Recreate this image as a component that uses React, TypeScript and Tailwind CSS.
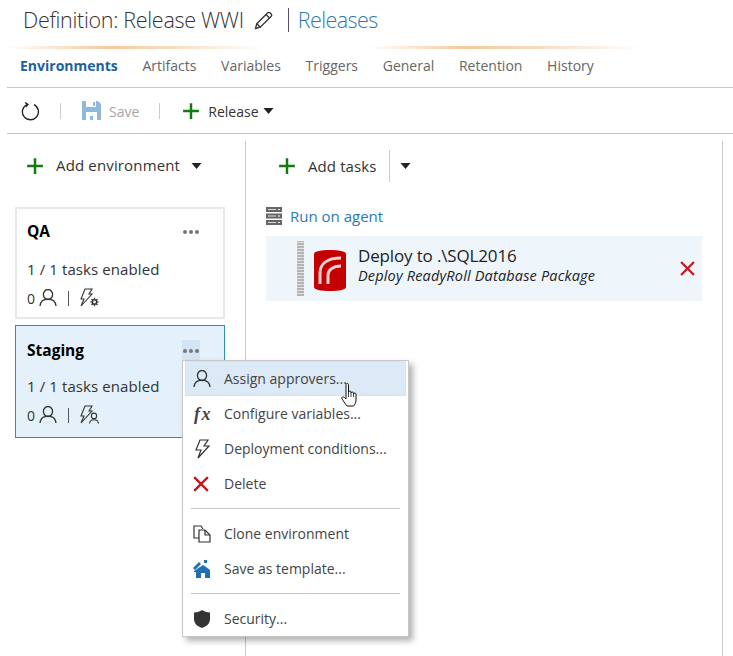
import React from "react";

const Plus = ({ size = 18 }: { size?: number }) => (
  <svg width={size} height={size} viewBox="0 0 16 16" className="shrink-0">
    <path d="M8 1v14M1 8h14" stroke="#107c10" strokeWidth="2.2" fill="none" />
  </svg>
);

const Caret = ({ w = 11 }: { w?: number }) => (
  <svg width={w} height={6} viewBox="0 0 10 6" className="shrink-0">
    <path d="M0 0h10L5 6z" fill="#222" />
  </svg>
);

const Person = ({ size = 18 }: { size?: number }) => (
  <svg width={size} height={size} viewBox="0 0 18 18" fill="none" stroke="#333" strokeWidth="1.3" className="shrink-0">
    <ellipse cx="9" cy="5.500" rx="4.600" ry="5" />
    <path d="M1 17c.5-4.400 3.800-6.800 8-6.800s7.500 2.400 8 6.800" />
  </svg>
);

const Bolt = ({ size = 20 }: { size?: number }) => (
  <svg width={size} height={size} viewBox="0 0 20 20" fill="none" stroke="#333" strokeWidth="1.2" className="shrink-0">
    <path d="M7 1h8l-4 6h5L5 19l3-8H3z" strokeLinejoin="miter" />
  </svg>
);

const BoltGear = () => (
  <svg width={20} height={20} viewBox="0 0 20 20" fill="none" stroke="#333" strokeWidth="1.1" className="shrink-0">
    <path d="M5 1h7L9 6h3L1 18l3-7H1z" />
    <circle cx="14.5" cy="14" r="2.2" strokeWidth="1.6" />
    <path d="M14.5 9.800v1.600M14.5 16.600v1.600M10.300 14h1.600M17.100 14h1.600M11.500 11l1.100 1.100M16.400 15.900l1.100 1.100M11.500 17l1.100-1.100M16.400 12.100l1.100-1.100" strokeWidth="1.2" />
  </svg>
);

const BoltPerson = () => (
  <svg width={20} height={20} viewBox="0 0 20 20" fill="none" stroke="#333" strokeWidth="1.1" className="shrink-0">
    <path d="M5 1h7L9 6h3L1 18l3-7H1z" />
    <ellipse cx="14" cy="11" rx="2.600" ry="2.900" />
    <path d="M9.500 18.500c.3-2.600 2-3.800 4.500-3.800s4.200 1.200 4.500 3.800" />
  </svg>
);

const RedX = ({ size = 14 }: { size?: number }) => (
  <svg width={size} height={size} viewBox="0 0 14 14" className="shrink-0">
    <path d="M1 1l12 12M13 1L1 13" stroke="#c8161d" strokeWidth="2.100" fill="none" />
  </svg>
);

const Refresh = () => (
  <svg width={19} height={20} viewBox="0 0 19 20" fill="none" stroke="#222" strokeWidth="1.300">
    <path d="M6.500 3.300A8 8 0 1 0 13 3.600" />
    <path d="M4 1.500l3 2-2.300 2.600" />
  </svg>
);

const Floppy = () => (
  <svg width={19} height={19} viewBox="0 0 19 19">
    <path d="M0 0h16l3 3v16H0z" fill="#8fb8de" />
    <path d="M4 0h10v6H4z" fill="#fff" />
    <path d="M11 1h2v4h-2z" fill="#8fb8de" />
    <path d="M4 11h11v8H4z" fill="#fff" />
    <path d="M8 15h3v4H8z" fill="#8fb8de" />
  </svg>
);

const Pencil = () => (
  <svg width={19} height={19} viewBox="0 0 19 19" fill="none" stroke="#333" strokeWidth="1.300">
    <path d="M1.500 17.500l1.300-4.800L13.500 2c.8-.8 2-.8 2.800 0l.7.7c.8.8.8 2 0 2.800L6.300 16.200z" />
    <path d="M12 3.500l3.500 3.500M2.800 12.700l3.500 3.500" />
  </svg>
);

const Server = () => (
  <svg width={16} height={18} viewBox="0 0 16 18">
    <path d="M0 0h16v5H0zM0 6.500h16v5H0zM0 13h16v5H0z" fill="#666" />
    <path d="M2 2h8v1H2zM2 8.500h8v1H2zM2 15h8v1H2z" fill="#ddd" />
    <path d="M12 2h2v1h-2zM12 8.500h2v1h-2zM12 15h2v1h-2z" fill="#fff" />
  </svg>
);

const ReadyRoll = () => (
  <svg width={32} height={41} viewBox="0 0 32 41" className="shrink-0">
    <path d="M0 4C0 1 8 0 16 0s16 1 16 4v33c0 3-8 4-16 4S0 40 0 37z" fill="#c40000" />
    <path d="M6 34V23C6 14 13 8 27 8" stroke="#f4d4d4" strokeWidth="3" fill="none" />
    <path d="M14 34v-9c0-5 5-9 13-9" stroke="#f4d4d4" strokeWidth="3" fill="none" />
  </svg>
);

const Fx = () => (
  <span className="ml-[1px] font-['Liberation_Serif',serif] text-[18px] font-bold italic leading-none tracking-[1.500px] text-[#444]">fx</span>
);

const Clone = () => (
  <svg width={18} height={18} viewBox="0 0 18 18" fill="none" stroke="#333" strokeWidth="1.200">
    <path d="M6 13H1V1h7l2 3" />
    <path d="M6 5h6l5 5v7H6z" fill="#fff" />
    <path d="M12 5v5h5" />
  </svg>
);

const Template = () => (
  <svg width={18} height={18} viewBox="0 0 18 18">
    <path d="M1 11l9-6 3 2 4 3v8h-5v-5H8v5H3v-6H1z" fill="#1e6fb4" />
    <path d="M0 8l6-6 2 2-6 6zM11 0h3v3h-3z" fill="#1e6fb4" />
    <path d="M8 13h4v5H8z" fill="#fff" />
  </svg>
);

const Shield = () => (
  <svg width={18} height={18} viewBox="0 0 18 18">
    <path d="M9 0c2 1.500 5 2.300 8 2.500V9c0 4.500-3.500 7.500-8 9-4.500-1.500-8-4.500-8-9V2.500C4 2.300 7 1.500 9 0z" fill="#333" />
  </svg>
);

const Hand = () => (
  <svg width={18} height={24} viewBox="0 0 18 24" className="absolute left-[155px] top-[21px]">
    <path
      d="M5 1.500c0-1.300 2.500-1.300 2.500 0V9c0-1.200 2.500-1.200 2.500 0v1c0-1.200 2.500-1.200 2.500 0v1c0-1.200 2.500-1.200 2.500 0v6c0 3-1.500 5-2.500 6H6c-1.500-1.500-3-4.500-5-7-1-1.500 1-3 2.500-1.500L5 16z"
      fill="#fff"
      stroke="#111"
      strokeWidth="1"
      strokeLinejoin="round"
    />
    <path d="M7.500 9v5M10 10v4M12.500 11v3" stroke="#111" strokeWidth="0.800" />
  </svg>
);

const Dots = () => (
  <div className="flex gap-[2px]">
    <span className="h-[4px] w-[4px] rounded-full bg-[#777]" />
    <span className="h-[4px] w-[4px] rounded-full bg-[#777]" />
    <span className="h-[4px] w-[4px] rounded-full bg-[#777]" />
  </div>
);

function EnvCard({ name, selected, icon }: { name: string; selected?: boolean; icon: React.ReactNode }) {
  return (
    <div
      className={
        selected
          ? "h-[113px] w-[210px] border border-[#2f8fb5] bg-[#e4f1fa] pl-[11px] pr-[24px] text-[#222]"
          : "h-[112px] w-[210px] border-2 border-[#e8e8e8] bg-white pl-[10px] pr-[23px] text-[#222]"
      }
    >
      <div className={selected ? "flex h-[49px] items-center justify-between" : "flex h-[45px] items-center justify-between"}>
        <span className="text-[15.5px] font-bold text-black">{name}</span>
        <div className={selected ? "flex h-[22px] w-[18px] items-center justify-center bg-[#d3e5f4]" : "flex h-[22px] w-[18px] items-center justify-center"}>
          <Dots />
        </div>
      </div>
      <div className={selected ? "text-[15px] leading-[22px] tracking-[0.1px] text-[#333]" : "mt-[4px] text-[15px] leading-[22px] tracking-[0.1px] text-[#333]"}>1 / 1 tasks enabled</div>
      <div className="mt-[6px] flex h-[24px] items-center text-[14px] text-[#333]">
        <span className="w-[12px]">0</span>
        <Person />
        <span className="ml-[11px] mr-[11px] h-[15px] w-[1px] bg-[#555]" />
        {icon}
      </div>
    </div>
  );
}

function MenuItem({ icon, label, active }: { icon: React.ReactNode; label: string; active?: boolean }) {
  return (
    <div
      className={
        active
          ? "relative mx-[2px] flex h-[35px] items-center border border-[#d3e3f3] bg-[#dce9f6] pl-[7px]"
          : "mx-[2px] flex h-[35px] items-center border border-transparent pl-[7px]"
      }
    >
      <span className="flex w-[31px] items-center">{icon}</span>
      <span className="text-[14px] text-[#444]">{label}</span>
      {active && <Hand />}
    </div>
  );
}

export default function App() {
  const tabs = ["Artifacts", "Variables", "Triggers", "General", "Retention", "History"];
  return (
    <div className="relative h-[656px] w-[733px] overflow-hidden bg-white font-['Open_Sans','Noto_Sans',sans-serif] text-[#222]">
      <div className="flex h-[46px] items-center pb-[6px] pl-[23px]">
        <span className="text-[21.5px] font-light tracking-[-0.3px] text-[#333]">Definition: Release WWI</span>
        <span className="ml-[10px]"><Pencil /></span>
        <span className="ml-[15px] h-[24px] w-[1px] bg-[#5c4a72]" />
        <span className="ml-[9px] text-[21.5px] font-light tracking-[-0.6px] text-[#2a7ab8]">Releases</span>
      </div>

      <div className="flex h-[3px] pl-[7px]">
        <div className="h-full w-[257px] bg-[linear-gradient(90deg,#fff,#f7c89c_40%,#fbe6d2_75%,#fff)]" />
        <div className="ml-[105px] h-full w-[272px] bg-[linear-gradient(90deg,#fff,#f7c89c_35%,#f9d9bd_60%,#fff)]" />
      </div>

      <div className="ml-[7px] flex h-[39px] items-center gap-[24.7px] border-b border-[#c8c8c8] pb-[6px] pl-[13px] text-[14px] text-[#666]">
        <span className="font-bold text-[#1e5f9e]">Environments</span>
        {tabs.map((t) => (
          <span key={t}>{t}</span>
        ))}
      </div>

      <div className="ml-[7px] flex h-[46px] items-center border-b border-[#c8c8c8] pl-[14px] text-[14px]">
        <Refresh />
        <span className="ml-[20px] h-[16px] w-[1px] bg-[#ccc]" />
        <span className="ml-[21px]"><Floppy /></span>
        <span className="ml-[8px] pt-[1px] text-[#a6a6a6]">Save</span>
        <span className="ml-[20px] h-[16px] w-[1px] bg-[#ccc]" />
        <span className="ml-[22px]"><Plus /></span>
        <span className="ml-[8px] pt-[1px] text-[#333]">Release</span>
        <span className="ml-[4px]"><Caret /></span>
      </div>

      <div className="ml-[7px] mt-[7px] flex h-[515px]">
        <div className="w-[239px] shrink-0 border-r border-[#c8c8c8]">
          <div className="flex h-[49px] items-center pl-[19px] text-[15px]">
            <Plus />
            <span className="ml-[12px] tracking-[0.15px] text-[#333]">Add environment</span>
            <span className="ml-[11px]"><Caret /></span>
          </div>
          <div className="ml-[8px] mt-[17px] flex flex-col gap-[6px]">
            <EnvCard name="QA" icon={<BoltGear />} />
            <EnvCard name="Staging" selected icon={<BoltPerson />} />
          </div>
        </div>

        <div className="w-[477px] shrink-0 border-r border-[#c8c8c8] pl-[20px]">
          <div className="flex h-[50px] items-center pl-[12px] text-[15px]">
            <Plus />
            <span className="ml-[12px] tracking-[0.1px] text-[#333]">Add tasks</span>
            <span className="ml-[12px] h-[32px] w-[1px] bg-[#ccc]" />
            <span className="ml-[10px]"><Caret /></span>
          </div>
          <div className="mt-[14px] flex h-[22px] items-center gap-[8px] text-[15px] text-[#2a7ab8]">
            <Server />
            <span>Run on agent</span>
          </div>
          <div className="mt-[9px] flex h-[65px] w-[436px] items-center bg-[#eef5fb] pl-[31px] pr-[7px]">
            <div className="h-[55px] w-[7px] bg-[repeating-linear-gradient(0deg,#b5b5b5_0,#b5b5b5_2px,#e0e0e0_2px,#e0e0e0_3px)]" />
            <span className="ml-[10px] mt-[4px]"><ReadyRoll /></span>
            <div className="mb-[8px] ml-[12px] min-w-0 flex-1">
              <div className="text-[17px] leading-[22px] tracking-[-0.15px] text-[#222]">Deploy to .\SQL2016</div>
              <div className="text-[14.5px] italic leading-[18px] tracking-[0.17px] text-[#222]">Deploy ReadyRoll Database Package</div>
            </div>
            <RedX size={15} />
          </div>
        </div>
      </div>

      <div className="absolute left-[182px] top-[360px] w-[227px] border border-[#c8c8c8] bg-white shadow-[4px_4px_6px_rgba(0,0,0,0.3)]">
        <MenuItem active icon={<Person />} label="Assign approvers..." />
        <MenuItem icon={<Fx />} label="Configure variables..." />
        <MenuItem icon={<Bolt />} label="Deployment conditions..." />
        <MenuItem icon={<RedX size={16} />} label="Delete" />
        <div className="mx-[8px] my-[7px] h-[1px] bg-[#c8c8c8]" />
        <MenuItem icon={<Clone />} label="Clone environment" />
        <MenuItem icon={<Template />} label="Save as template..." />
        <div className="mx-[8px] my-[7px] h-[1px] bg-[#c8c8c8]" />
        <MenuItem icon={<Shield />} label="Security..." />
      </div>
    </div>
  );
}
